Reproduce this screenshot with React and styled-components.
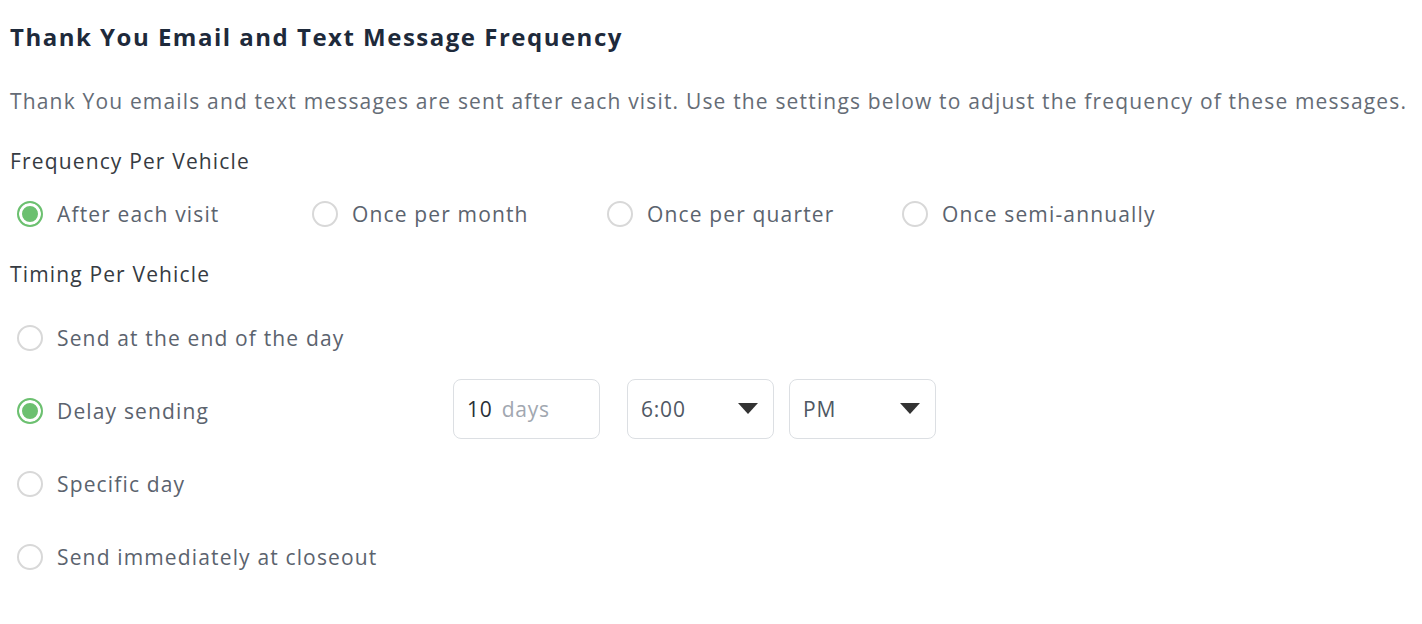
import { useState } from 'react';
import styled, { createGlobalStyle } from 'styled-components';

const GlobalStyle = createGlobalStyle`
    body {
        margin: 0;
        background: #ffffff;
        font-family: 'Open Sans', 'Liberation Sans', sans-serif;
    }
`;

const frequencyOptions = ['After each visit', 'Once per month', 'Once per quarter', 'Once semi-annually'];

const timingOptions = [
    { id: 'end', label: 'Send at the end of the day' },
    { id: 'delay', label: 'Delay sending' },
    { id: 'specific', label: 'Specific day' },
    { id: 'immediate', label: 'Send immediately at closeout' },
];

const App = () => {
    const [frequency, setFrequency] = useState(0);
    const [timing, setTiming] = useState('delay');

    return (
        <>
            <GlobalStyle />
            <Page>
                <Title>Thank You Email and Text Message Frequency</Title>
                <Description>
                    Thank You emails and text messages are sent after each visit. Use the settings below to adjust the frequency of these messages.
                </Description>

                <SectionLabel>Frequency Per Vehicle</SectionLabel>
                <FrequencyRow>
                    {frequencyOptions.map((label, index) => (
                        <FrequencyOption key={label} onClick={() => setFrequency(index)}>
                            <Radio checked={frequency === index} />
                            <OptionText>{label}</OptionText>
                        </FrequencyOption>
                    ))}
                </FrequencyRow>

                <SectionLabel>Timing Per Vehicle</SectionLabel>
                <TimingList>
                    {timingOptions.map(opt => (
                        <TimingRow key={opt.id}>
                            <TimingOption onClick={() => setTiming(opt.id)}>
                                <Radio checked={timing === opt.id} />
                                <OptionText>{opt.label}</OptionText>
                            </TimingOption>
                            {opt.id === 'delay' && (
                                <Controls>
                                    <Field>
                                        <FieldValue>10</FieldValue>
                                        <FieldUnit>days</FieldUnit>
                                    </Field>
                                    <Select>
                                        <FieldValue muted>6:00</FieldValue>
                                        <Caret />
                                    </Select>
                                    <Select>
                                        <FieldValue muted>PM</FieldValue>
                                        <Caret />
                                    </Select>
                                </Controls>
                            )}
                        </TimingRow>
                    ))}
                </TimingList>
            </Page>
        </>
    );
};
export default App;

const Page = styled.div`
    padding: 19px 10px 40px;
    display: flex;
    flex-direction: column;
`;

const Title = styled.h1`
    margin: 0;
    font-size: 24px;
    font-weight: 700;
    letter-spacing: 1.5px;
    color: #1e2a3b;
    line-height: 36px;
    white-space: nowrap;
`;

const Description = styled.p`
    margin: 31px 0 0;
    font-size: 21px;
    letter-spacing: 1.17px;
    color: #656c76;
    line-height: 30px;
    white-space: nowrap;
`;

const SectionLabel = styled.div`
    margin-top: 30px;
    font-size: 21px;
    letter-spacing: 1.15px;
    color: #363b42;
    line-height: 30px;
`;

const FrequencyRow = styled.div`
    display: flex;
    margin-top: 23px;
    padding-left: 7px;
`;

const FrequencyOption = styled.label`
    width: 295px;
    display: flex;
    align-items: center;
    gap: 14px;
    cursor: pointer;
`;

const Radio = styled.span`
    width: 26px;
    height: 26px;
    box-sizing: border-box;
    border-radius: 50%;
    flex-shrink: 0;
    border: 2px solid ${props => (props.checked ? '#6cc070' : '#d8d8d8')};
    background: ${props => (props.checked ? '#6cc070' : '#fff')};
    box-shadow: ${props => (props.checked ? 'inset 0 0 0 3px #fff' : 'none')};
`;

const OptionText = styled.span`
    font-size: 21px;
    letter-spacing: 1.15px;
    color: #5b636e;
    line-height: 30px;
    white-space: nowrap;
`;

const TimingList = styled.div`
    display: flex;
    flex-direction: column;
    gap: 13px;
    margin-top: 19px;
    padding-left: 7px;
`;

const TimingRow = styled.div`
    display: flex;
    align-items: center;
    height: 60px;
`;

const TimingOption = styled.label`
    width: 436px;
    display: flex;
    align-items: center;
    gap: 14px;
    cursor: pointer;
`;

const Controls = styled.div`
    display: flex;
    gap: 15px;
    margin-top: -5px;
`;

const boxBase = `
    box-sizing: border-box;
    width: 147px;
    height: 60px;
    border: 1.5px solid #dcdfe3;
    border-radius: 8px;
    display: flex;
    align-items: center;
    padding: 0 13px;
`;

const Field = styled.div`
    ${boxBase}
    gap: 9px;
    margin-right: 12px;
`;

const Select = styled.div`
    ${boxBase}
    justify-content: space-between;
    padding-right: 15px;
`;

const FieldValue = styled.span`
    font-size: 21px;
    letter-spacing: 0.8px;
    color: ${props => (props.muted ? '#4f5864' : '#2a2f36')};
`;

const FieldUnit = styled.span`
    font-size: 21px;
    letter-spacing: 0.8px;
    color: #a1a7b0;
`;

const Caret = styled.span`
    width: 0;
    height: 0;
    border-left: 10px solid transparent;
    border-right: 10px solid transparent;
    border-top: 11px solid #333;
`;
